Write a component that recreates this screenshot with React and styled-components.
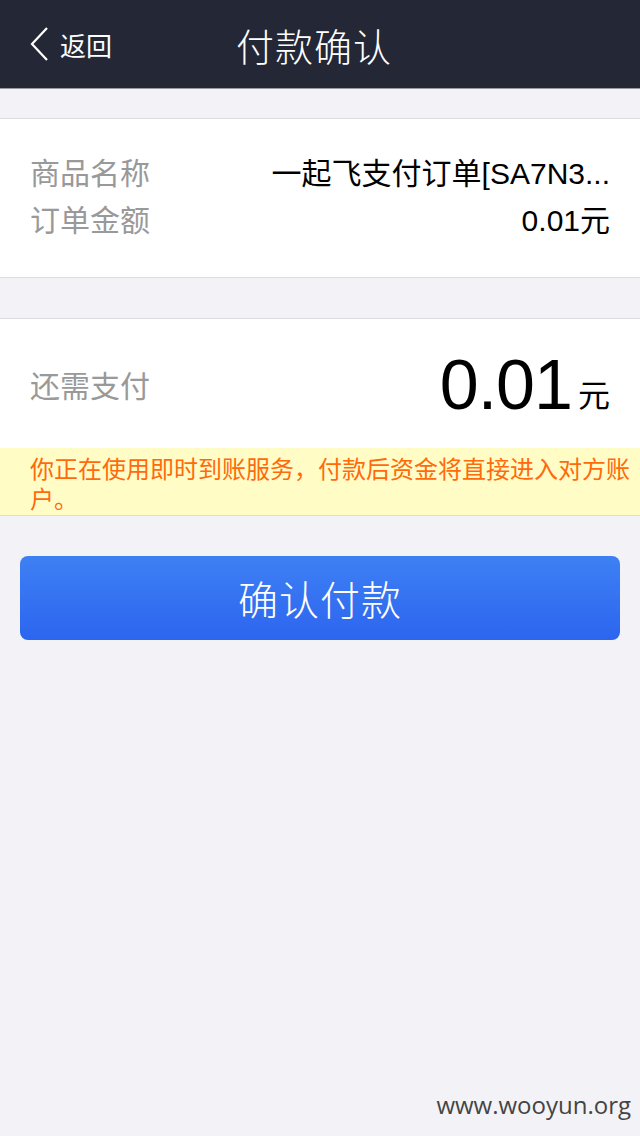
import React from "react";
import styled, { createGlobalStyle } from "styled-components";

const Global = createGlobalStyle`
  html, body { margin: 0; padding: 0; background: #f3f3f7; }
  body { font-family: "Liberation Sans", "Noto Sans CJK SC", sans-serif; }
  * { box-sizing: border-box; }
`;

const Page = styled.div`
  width: 640px;
  height: 1136px;
  background: #f3f3f7;
  display: flex;
  flex-direction: column;
`;

const NavBar = styled.header`
  height: 89px;
  background: #242736;
  border-bottom: 1px solid #9a9ba0;
  display: grid;
  grid-template-columns: 1fr auto 1fr;
  align-items: center;
  color: #fff;
`;

const Back = styled.div`
  display: flex;
  align-items: center;
  gap: 10px;
  padding-left: 30px;
  font-size: 26px;
  color: #fff;
`;

const Title = styled.h1`
  margin: 0 0 0 -12px;
  font-size: 38px;
  font-weight: 300;
  font-family: "Noto Sans CJK SC", sans-serif;
  letter-spacing: 1px;
`;

const Card = styled.section`
  margin-top: ${(p) => p.$top}px;
  background: #fff;
  border-top: 1px solid #dcdce0;
  border-bottom: 1px solid #dcdce0;
`;

const InfoList = styled.div`
  padding: 34px 30px 42px;
  display: flex;
  flex-direction: column;
  gap: 12px;
`;

const Row = styled.div`
  display: flex;
  justify-content: space-between;
  align-items: center;
  height: 35px;
`;

const Label = styled.span`
  color: #999;
  font-size: 30px;
`;

const Value = styled.span`
  color: #000;
  font-size: 30px;
`;

const PayRow = styled.div`
  height: 129px;
  padding: 0 30px;
  display: flex;
  justify-content: space-between;
  align-items: center;
`;

const Amount = styled.div`
  display: flex;
  align-items: baseline;
  color: #000;
  margin-top: 2px;
`;

const Big = styled.span`
  font-size: 70px;
  letter-spacing: -1px;
`;

const Unit = styled.span`
  font-size: 32px;
  margin-left: 6px;
  position: relative;
  top: -2px;
`;

const Notice = styled.div`
  background: #fffcc6;
  color: #ff6a0c;
  font-size: 24px;
  line-height: 30px;
  padding: 7px 4px 0 30px;
  height: 67px;
`;

const ButtonWrap = styled.div`
  padding: 40px 20px 0;
`;

const Button = styled.button`
  width: 600px;
  height: 84px;
  border: none;
  border-radius: 8px;
  background: linear-gradient(#3e80f4, #2c65ef);
  color: #fff;
  font-size: 40px;
  font-family: "Noto Sans CJK SC", sans-serif;
  font-weight: 300;
  letter-spacing: 1px;
`;

const Spacer = styled.div`
  flex: 1;
`;

const Watermark = styled.div`
  text-align: right;
  padding: 0 9px 15px 0;
  font-family: "Open Sans", "DejaVu Sans", sans-serif;
  font-size: 24px;
  color: #444;
`;

export default function App() {
  return (
    <Page>
      <Global />
      <NavBar>
        <Back>
          <svg width="20" height="36" viewBox="0 0 20 36">
            <path d="M17 2 L2 18 L17 34" fill="none" stroke="#fff" strokeWidth="2.2" />
          </svg>
          <span>返回</span>
        </Back>
        <Title>付款确认</Title>
        <div />
      </NavBar>
      <Card $top={29}>
        <InfoList>
          <Row>
            <Label>商品名称</Label>
            <Value>一起飞支付订单[SA7N3...</Value>
          </Row>
          <Row>
            <Label>订单金额</Label>
            <Value>0.01元</Value>
          </Row>
        </InfoList>
      </Card>
      <Card $top={40}>
        <PayRow>
          <Label>还需支付</Label>
          <Amount>
            <Big>0.01</Big>
            <Unit>元</Unit>
          </Amount>
        </PayRow>
        <Notice>你正在使用即时到账服务，付款后资金将直接进入对方账户。</Notice>
      </Card>
      <ButtonWrap>
        <Button>确认付款</Button>
      </ButtonWrap>
      <Spacer />
      <Watermark>www.wooyun.org</Watermark>
    </Page>
  );
}
